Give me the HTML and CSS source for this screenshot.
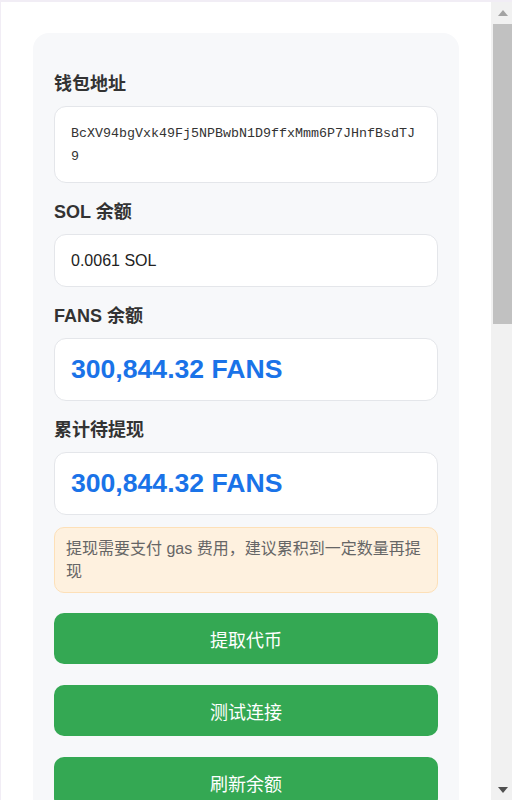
FILE: index.html
```html
<!DOCTYPE html>
<html lang="zh-CN">
<head>
<meta charset="utf-8">
<title>钱包</title>
<link rel="stylesheet" href="styles.css">
</head>
<body>
<div class="frame">
  <div class="viewport">
    <div class="card">
      <div class="field">
        <div class="label">钱包地址</div>
        <div class="box address">BcXV94bgVxk49Fj5NPBwbN1D9ffxMmm6P7JHnfBsdTJ9</div>
      </div>
      <div class="field">
        <div class="label">SOL 余额</div>
        <div class="box plain">0.0061 SOL</div>
      </div>
      <div class="field">
        <div class="label">FANS 余额</div>
        <div class="box big">300,844.32 FANS</div>
      </div>
      <div class="field">
        <div class="label">累计待提现</div>
        <div class="box big">300,844.32 FANS</div>
      </div>
      <div class="notice">提现需要支付 gas 费用，建议累积到一定数量再提现</div>
      <div class="actions">
        <button class="btn">提取代币</button>
        <button class="btn">测试连接</button>
        <button class="btn">刷新余额</button>
      </div>
    </div>
  </div>
  <div class="scrollbar" aria-hidden="true">
    <div class="sb-btn">
      <svg width="10" height="6" viewBox="0 0 10 6"><polygon points="0,6 10,6 5,0" fill="#a3a3a3"/></svg>
    </div>
    <div class="sb-track">
      <div class="sb-thumb"></div>
    </div>
    <div class="sb-btn">
      <svg width="10" height="6" viewBox="0 0 10 6"><polygon points="0,0 10,0 5,6" fill="#505050"/></svg>
    </div>
  </div>
</div>
</body>
</html>
```

FILE: styles.css
```css
html, body {
  margin: 0;
  padding: 0;
}
body {
  background: #f1edf5;
  font-family: "Liberation Sans", "Noto Sans CJK SC", sans-serif;
  color: #333;
}
.frame {
  display: flex;
  margin: 2px 0 0 1px;
  height: 798px;
  background: #fff;
  overflow: hidden;
}
.viewport {
  flex: 1;
  min-width: 0;
  overflow: hidden;
}
.scrollbar {
  width: 21px;
  flex: none;
  display: flex;
  flex-direction: column;
  background: #f1f1f1;
}
.sb-btn {
  height: 21px;
  display: flex;
  align-items: center;
  justify-content: center;
  padding-left: 2px;
}
.sb-track {
  flex: 1;
  padding-left: 2px;
}
.sb-thumb {
  height: 300px;
  margin-top: 1px;
  background: #c1c1c1;
}
.card {
  margin: 31px 32px 40px;
  padding: 38px 21px 40px;
  background: #f7f8fa;
  border-radius: 16px;
  min-height: 1850px;
}
.field {
  margin-bottom: 16px;
}
.label {
  font-size: 18px;
  line-height: 27px;
  font-weight: bold;
  color: #333;
  margin-bottom: 8px;
}
.box {
  background: #fff;
  border: 1px solid #e4e6ea;
  border-radius: 12px;
  padding: 15px 16px;
}
.address {
  font-family: "Liberation Mono", "Noto Sans CJK SC", monospace;
  font-size: 13.33px;
  line-height: 23px;
  padding-top: 14.5px;
  padding-bottom: 14.5px;
  word-break: break-all;
  color: #333;
}
.plain {
  font-size: 16px;
  line-height: 21px;
  color: #222;
}
.big {
  font-size: 26.6px;
  line-height: 31px;
  font-weight: bold;
  color: #1a73e8;
}
.notice {
  margin-top: -4px;
  background: #fef1df;
  border: 1px solid #fde0b8;
  border-radius: 10px;
  padding: 9px 11px 9px;
  font-size: 16px;
  line-height: 23px;
  color: #666;
}
.actions {
  display: flex;
  flex-direction: column;
  gap: 21px;
  margin-top: 20px;
}
.btn {
  display: block;
  width: 100%;
  height: 51px;
  border: 0;
  border-radius: 10px;
  background: #34a853;
  color: #fff;
  font-family: "Noto Sans CJK SC", sans-serif;
  font-size: 18px;
  cursor: pointer;
}
```
